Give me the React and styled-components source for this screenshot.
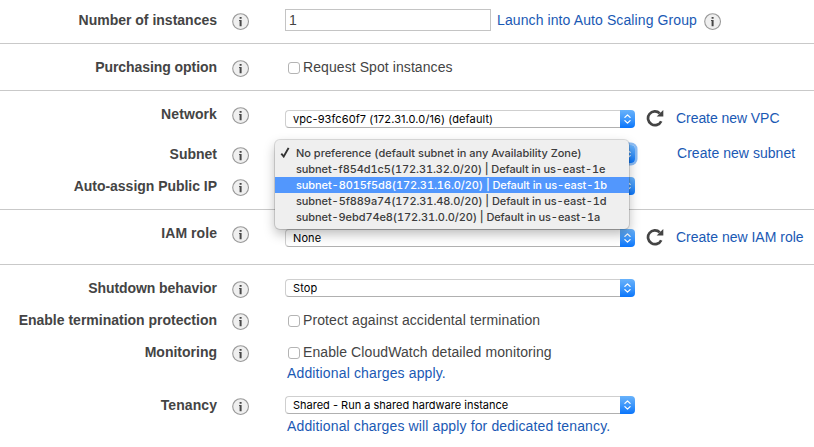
import React from 'react';
import styled, { createGlobalStyle } from 'styled-components';

const GlobalStyle = createGlobalStyle`
  * { box-sizing: border-box; }
  body {
    margin: 0;
    background: #fff;
    color: #444;
    font: 14px/18px "Liberation Sans", Arial, sans-serif;
    overflow: hidden;
  }
`;

const Form = styled.main`
  width: 814px;
  height: 447px;
  overflow: hidden;
`;

const Section = styled.section`
  padding: ${(p) => (p.$first ? 5 : 8)}px 0 6px;
  & + & { border-top: 1px solid #c9c9c9; }
`;

const Row = styled.div`
  display: flex;
  height: ${(p) => p.$height || 32}px;
`;

const Label = styled.div`
  width: 217px;
  padding-top: 6px;
  text-align: right;
  font-weight: bold;
  white-space: nowrap;
  letter-spacing: ${(p) => p.$track || 0}px;
`;

const InfoSlot = styled.div`
  width: 68px;
  padding: 8px 0 0 15px;
`;

const InfoSvg = styled.svg`
  display: block;
  flex: none;
`;

const Field = styled.div`
  position: relative;
  width: 350px;
  padding-top: ${(p) => p.$top ?? 6}px;
`;

const CountField = styled.div`
  display: flex;
  align-items: flex-start;
  padding-top: 4px;
`;

const CountInput = styled.input`
  width: 206px;
  height: 22px;
  margin-right: 6px;
  padding: 0 3px 1px;
  border: 1px solid #c4c4c4;
  border-radius: 0;
  outline: 0;
  color: #444;
  font: inherit;
`;

const Link = styled.a`
  color: #1a59b4;
  white-space: nowrap;
  letter-spacing: ${(p) => p.$track || 0}px;
`;

const CountLink = styled(Link)`
  margin: 2px 7px 0 0;
`;

const CountInfo = styled.div`
  padding-top: 4px;
`;

const Note = styled(Link)`
  display: block;
  padding: ${(p) => p.$gap}px 0 0 2px;
`;

const SelectBox = styled.div`
  display: flex;
  width: 350px;
  height: 18px;
  border-radius: 4px;
  box-shadow: ${(p) => (p.$focused ? '0 0 0 2.5px #8dbdf5' : 'none')};
`;

const SelectValue = styled.div`
  flex: 1;
  padding-left: 7px;
  border: 1px solid #cfcfcf;
  border-bottom-color: #b0b0b0;
  border-right: 0;
  border-radius: 4px 0 0 4px;
  color: #000;
  font: 11px/16px Inter, sans-serif;
  letter-spacing: ${(p) => p.$track || 0}px;
  white-space: nowrap;
`;

const SelectButton = styled.div`
  display: flex;
  align-items: center;
  justify-content: center;
  width: 15px;
  border-radius: 0 4px 4px 0;
  background: linear-gradient(#68b2fb, #3f98fb 50%, #0a75fb);
`;

const CheckLabel = styled.label`
  display: flex;
  align-items: flex-start;
  padding-left: 3px;
  white-space: nowrap;
  letter-spacing: ${(p) => p.$track || 0}px;
`;

const CheckBox = styled.input`
  appearance: none;
  width: 12px;
  height: 12px;
  margin: 4px 3px 0 0;
  border: 1px solid #b4b4b4;
  border-radius: 3px;
  background: #fff;
`;

const Aside = styled.div`
  display: flex;
  align-items: flex-start;
  padding: ${(p) => p.$top}px 0 0 11px;
`;

const AsideLink = styled(Link)`
  margin-left: ${(p) => p.$indent}px;
`;

const Menu = styled.ul`
  position: absolute;
  z-index: 1;
  top: 1px;
  left: -10px;
  width: 354px;
  height: 89px;
  margin: 0;
  padding: 5px 0 4px;
  list-style: none;
  border-radius: 5px;
  background: #efefef;
  box-shadow: 0 0 0 1px rgba(0, 0, 0, 0.13), 0 5px 12px rgba(0, 0, 0, 0.27);
`;

const MenuItem = styled.li`
  display: flex;
  height: 16px;
  padding-left: 5px;
  background: ${(p) => (p.$active ? '#5297fd' : 'transparent')};
  color: ${(p) => (p.$active ? '#fff' : '#3c3c3c')};
  font: 500 11px/16px Inter, sans-serif;
  font-variant-numeric: tabular-nums;
  letter-spacing: ${(p) => p.$track}px;
  white-space: nowrap;
`;

const MenuMark = styled.span`
  width: 16px;
  padding-top: 2px;
`;

const Glyph = styled.svg`
  display: block;
  flex: none;
`;

function Info() {
  return (
    <InfoSvg width="18" height="18" viewBox="0 0 18 18" aria-label="Info">
      <circle cx="8.6" cy="8.6" r="7.9" fill="#efefef" stroke="#999" strokeWidth="1.1" />
      <path d="M7.6 3.9h2v1.9h-2zM7 7h2.6v6.3h-2V7.9H7z" fill="#484848" />
    </InfoSvg>
  );
}

function Refresh() {
  return (
    <Glyph width="18" height="18" viewBox="0 0 18 18" aria-label="Refresh">
      <path d="M13.8 4.4A6.9 6.9 0 1 0 15.2 12.2" fill="none" stroke="#444" strokeWidth="2.7" />
      <path d="M17.3 1V7.6H10.7z" fill="#444" />
    </Glyph>
  );
}

function Select({ children, focused, track }) {
  return (
    <SelectBox $focused={focused}>
      <SelectValue $track={track}>{children}</SelectValue>
      <SelectButton>
        <Glyph width="9" height="12" viewBox="0 0 9 12">
          <path
            d="M1.9 4.4 4.5 1.9 7.1 4.4M1.9 7.6 4.5 10.1 7.1 7.6"
            fill="none"
            stroke="#fff"
            strokeWidth="1.3"
            strokeLinecap="round"
            strokeLinejoin="round"
          />
        </Glyph>
      </SelectButton>
    </SelectBox>
  );
}

function Check({ children, track }) {
  return (
    <CheckLabel $track={track}>
      <CheckBox type="checkbox" />
      {children}
    </CheckLabel>
  );
}

function FormRow({ label, height, track, children }) {
  return (
    <Row $height={height}>
      <Label $track={track}>{label}</Label>
      <InfoSlot>
        <Info />
      </InfoSlot>
      {children}
    </Row>
  );
}

const subnets = [
  { text: 'No preference (default subnet in any Availability Zone)', track: -0.02, checked: true },
  { text: 'subnet-f854d1c5(172.31.32.0/20) | Default in us-east-1e', track: -0.1 },
  { text: 'subnet-8015f5d8(172.31.16.0/20) | Default in us-east-1b', track: -0.09, active: true },
  { text: 'subnet-5f889a74(172.31.48.0/20) | Default in us-east-1d', track: -0.09 },
  { text: 'subnet-9ebd74e8(172.31.0.0/20) | Default in us-east-1a', track: -0.1 },
];

function SubnetMenu() {
  return (
    <Menu>
      {subnets.map((s) => (
        <MenuItem key={s.text} $active={s.active} $track={s.track}>
          <MenuMark>
            {s.checked && (
              <Glyph width="10" height="11" viewBox="0 0 10 11">
                <path d="M1.3 6.6 3.7 9.5 8.6.9" fill="none" stroke="#333" strokeWidth="1.9" />
              </Glyph>
            )}
          </MenuMark>
          {s.text}
        </MenuItem>
      ))}
    </Menu>
  );
}

export default function App() {
  return (
    <>
      <GlobalStyle />
      <Form>
        <Section $first>
          <FormRow label="Number of instances">
            <CountField>
              <CountInput defaultValue="1" />
              <CountLink $track={0.1}>Launch into Auto Scaling Group</CountLink>
              <CountInfo>
                <Info />
              </CountInfo>
            </CountField>
          </FormRow>
        </Section>
        <Section>
          <FormRow label="Purchasing option" track={-0.06}>
            <Field>
              <Check track={0.08}>Request Spot instances</Check>
            </Field>
          </FormRow>
        </Section>
        <Section>
          <FormRow label="Network" height={40} track={0.1}>
            <Field $top={11}>
              <Select track={0.1}>vpc-93fc60f7 (172.31.0.0/16) (default)</Select>
            </Field>
            <Aside $top={10}>
              <Refresh />
              <AsideLink $indent={12} $track={-0.06}>Create new VPC</AsideLink>
            </Aside>
          </FormRow>
          <FormRow label="Subnet">
            <Field>
              <Select focused />
              <SubnetMenu />
            </Field>
            <Aside $top={5}>
              <AsideLink $indent={31} $track={0.04}>Create new subnet</AsideLink>
            </Aside>
          </FormRow>
          <FormRow label="Auto-assign Public IP" track={-0.03}>
            <Field>
              <Select />
            </Field>
          </FormRow>
        </Section>
        <Section>
          <FormRow label="IAM role" height={40} track={0.05}>
            <Field $top={11}>
              <Select track={0.1}>None</Select>
            </Field>
            <Aside $top={10}>
              <Refresh />
              <AsideLink $indent={12}>Create new IAM role</AsideLink>
            </Aside>
          </FormRow>
        </Section>
        <Section>
          <FormRow label="Shutdown behavior" track={-0.06}>
            <Field>
              <Select track={0.1}>Stop</Select>
            </Field>
          </FormRow>
          <FormRow label="Enable termination protection">
            <Field>
              <Check track={0.1}>Protect against accidental termination</Check>
            </Field>
          </FormRow>
          <FormRow label="Monitoring" height={53}>
            <Field>
              <Check track={0.09}>Enable CloudWatch detailed monitoring</Check>
              <Note $gap={3} $track={0.14}>Additional charges apply.</Note>
            </Field>
          </FormRow>
          <FormRow label="Tenancy" height={53} track={0.08}>
            <Field>
              <Select>Shared - Run a shared hardware instance</Select>
              <Note $gap={3} $track={0.13}>
                Additional charges will apply for dedicated tenancy.
              </Note>
            </Field>
          </FormRow>
        </Section>
      </Form>
    </>
  );
}
